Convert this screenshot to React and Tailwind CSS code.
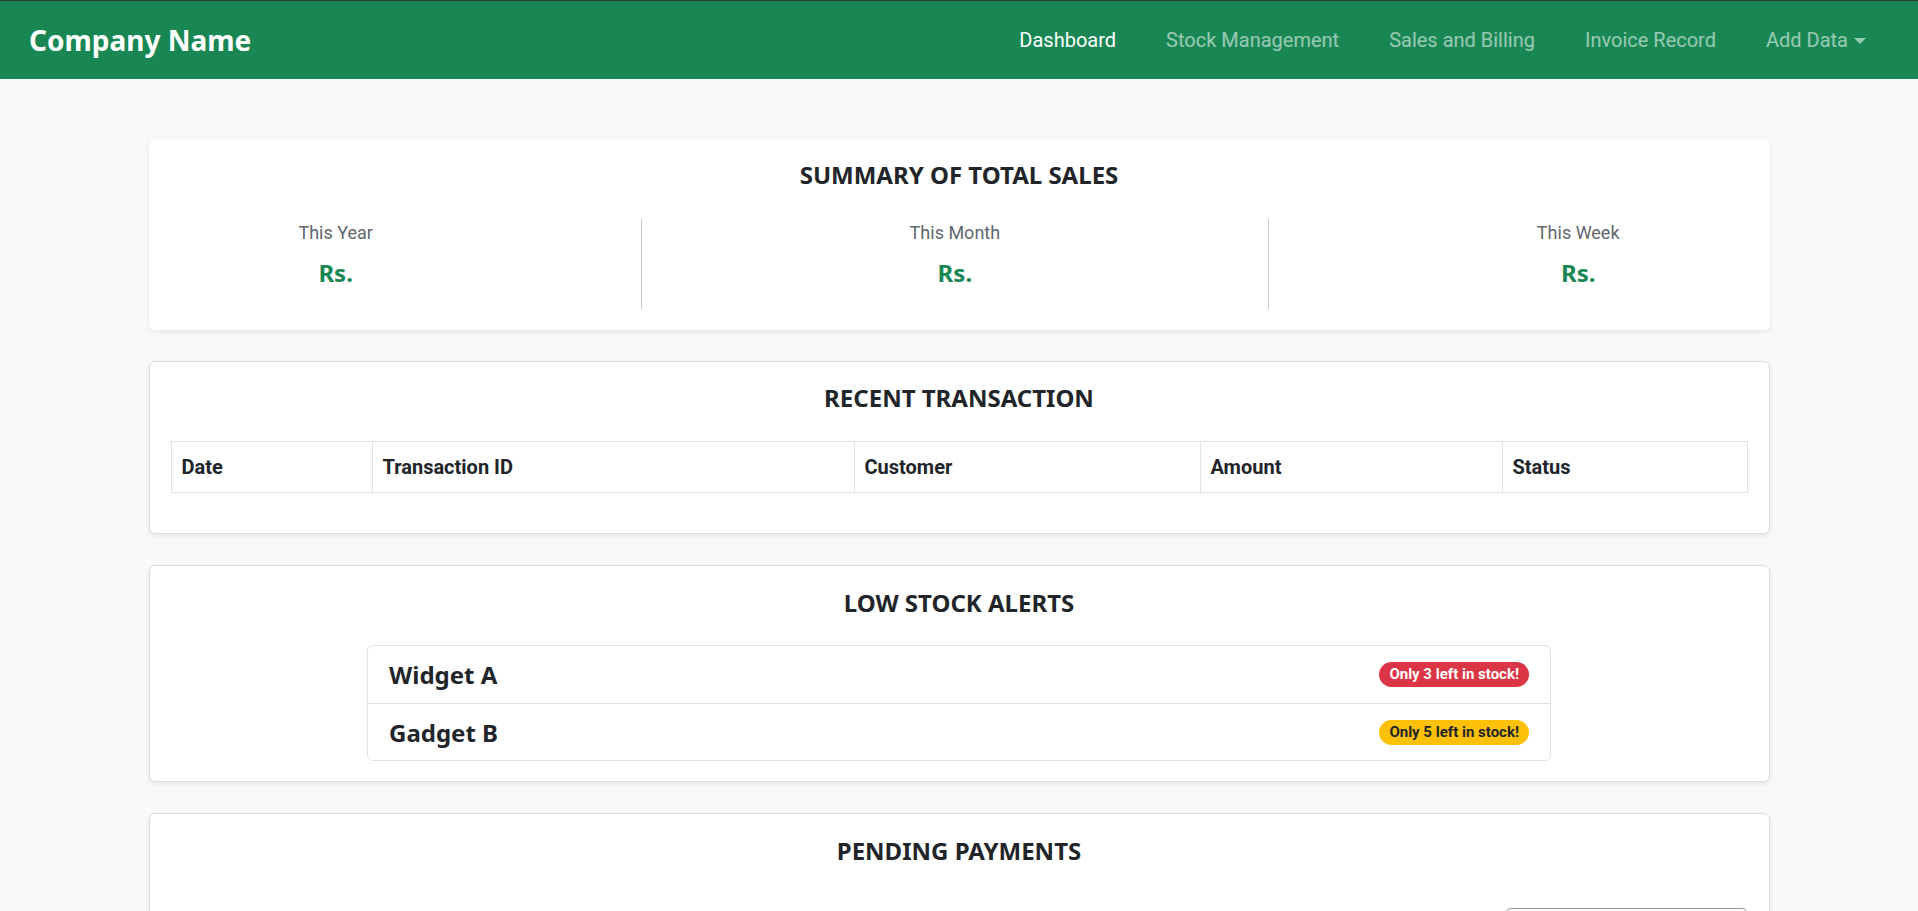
const navLinks = [
  { label: "Dashboard", active: true },
  { label: "Stock Management" },
  { label: "Sales and Billing" },
  { label: "Invoice Record" },
];

const totals = [
  { label: "This Year", value: "Rs." },
  { label: "This Month", value: "Rs." },
  { label: "This Week", value: "Rs." },
];

const columns = [
  { label: "Date", width: "w-[201px]" },
  { label: "Transaction ID", width: "w-[482px]" },
  { label: "Customer", width: "w-[346px]" },
  { label: "Amount", width: "w-[302px]" },
  { label: "Status", width: "w-[245px]" },
];

const alerts = [
  { name: "Widget A", note: "Only 3 left in stock!", badge: "bg-[#dc3545] text-white" },
  { name: "Gadget B", note: "Only 5 left in stock!", badge: "bg-[#ffc107] text-[#212529]" },
];

// bold text looks closer to the original with Noto Sans
const heavy = "font-['Noto_Sans',sans-serif] font-bold";

function Navbar() {
  return (
    <header className="flex h-[79px] items-center justify-between border-t border-[#3a3a3a] bg-[#198754] pl-[29px] pr-[52px]">
      <a href="#" className={`${heavy} text-[28px] leading-none text-white`}>
        Company Name
      </a>
      <nav className="flex items-center gap-[50px] text-[20px] leading-[30px]">
        {navLinks.map((link) => (
          <a
            key={link.label}
            href="#"
            className={link.active ? "text-white" : "text-white/55 hover:text-white/75"}
          >
            {link.label}
          </a>
        ))}
        <button type="button" className="flex items-center text-white/55">
          Add Data
          <span className="ml-[6px] mt-[2px] h-0 w-0 border-x-[6px] border-t-[6px] border-x-transparent border-t-white/55" />
        </button>
      </nav>
    </header>
  );
}

function CardTitle({ children }) {
  return <h2 className={`${heavy} text-center text-[24px] leading-[29px] text-[#212529]`}>{children}</h2>;
}

export default function App() {
  return (
    <div className="min-h-screen bg-[#f8f9fa] font-['Segoe_UI',Roboto,'Noto_Sans',sans-serif] text-[#212529]">
      <Navbar />

      <main className="mx-auto flex w-[1621px] flex-col gap-[31px] pb-10 pt-[60px]">
        <section className="rounded-md bg-white px-4 pb-[21px] pt-[21px] shadow-[0_2px_5px_rgba(0,0,0,0.08)]">
          <CardTitle>SUMMARY OF TOTAL SALES</CardTitle>
          <div className="mt-[30px] flex h-[90px] justify-around">
            {totals.map((item, i) => (
              <div key={item.label} className="contents">
                {i > 0 && <div className="w-px self-stretch bg-[#c8c8c8]" />}
                <div className="flex flex-col items-center">
                  <p className="text-[18px] leading-[27px] text-[#5f666d]">{item.label}</p>
                  <p className={`${heavy} mt-[12px] text-[24px] leading-[29px] text-[#198754]`}>{item.value}</p>
                </div>
              </div>
            ))}
          </div>
        </section>

        <section className="rounded-md border border-[#d9dcdf] bg-white px-[21px] pb-[40px] pt-[21px] shadow-[0_2px_5px_rgba(0,0,0,0.08)]">
          <CardTitle>RECENT TRANSACTION</CardTitle>
          <table className="mt-[29px] w-full table-fixed border-collapse">
            <thead>
              <tr>
                {columns.map((col) => (
                  <th
                    key={col.label}
                    className={`${col.width} border border-[#dee2e6] px-[10px] py-[10px] text-left text-[20px] font-bold leading-[30px]`}
                  >
                    {col.label}
                  </th>
                ))}
              </tr>
            </thead>
          </table>
        </section>

        <section className="rounded-md border border-[#d9dcdf] bg-white px-[21px] pb-[20px] pt-[22px] shadow-[0_2px_5px_rgba(0,0,0,0.08)]">
          <CardTitle>LOW STOCK ALERTS</CardTitle>
          <ul className="mx-auto mt-[28px] w-[1184px] rounded-md border border-[#dee2e6]">
            {alerts.map((item, i) => (
              <li
                key={item.name}
                className={`flex h-[57px] items-center justify-between px-[21px] ${i > 0 ? "border-t border-[#dee2e6]" : ""}`}
              >
                <span className={`${heavy} text-[24px] leading-[29px]`}>{item.name}</span>
                <span className={`rounded-full px-[10px] py-[5px] text-[15px] font-bold leading-[15px] ${item.badge}`}>
                  {item.note}
                </span>
              </li>
            ))}
          </ul>
        </section>

        <section className="rounded-md border border-[#d9dcdf] bg-white px-[21px] pb-[40px] pt-[22px] shadow-[0_2px_5px_rgba(0,0,0,0.08)]">
          <CardTitle>PENDING PAYMENTS</CardTitle>
          <div className="mt-[43px] flex justify-end">
            <input
              type="text"
              placeholder="Search"
              className="h-[38px] w-[243px] rounded-md border border-[#9a9a9a] px-3 text-[16px] outline-none"
            />
          </div>
          <table className="mt-4 w-full table-fixed border-collapse">
            <thead>
              <tr>
                {["Invoice", "Customer", "Due Date", "Amount", "Status"].map((label) => (
                  <th key={label} className="border border-[#dee2e6] px-[10px] py-[10px] text-left text-[20px] font-bold leading-[30px]">
                    {label}
                  </th>
                ))}
              </tr>
            </thead>
          </table>
        </section>
      </main>
    </div>
  );
}
